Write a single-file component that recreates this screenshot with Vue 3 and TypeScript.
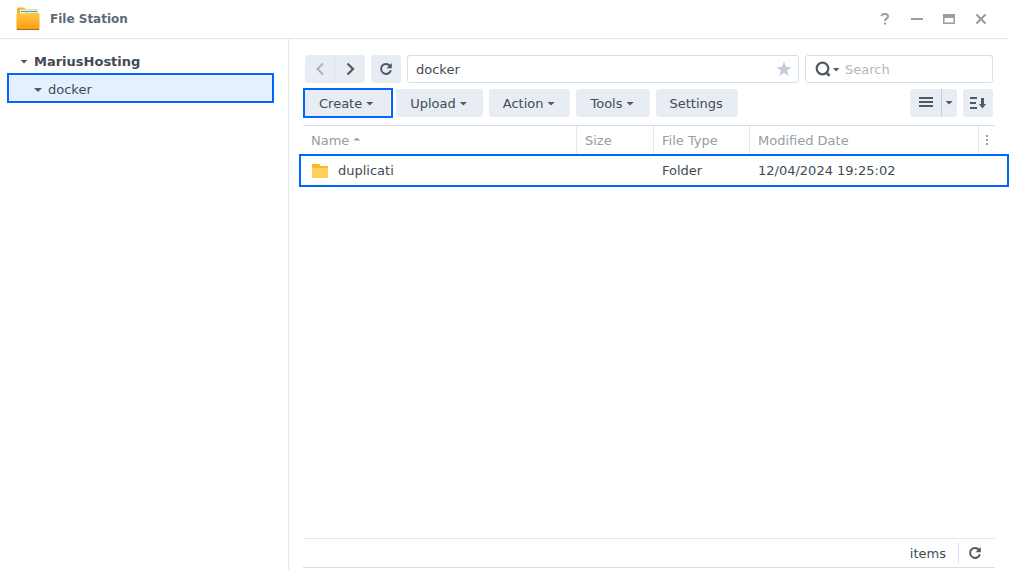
<script setup lang="ts">
import { ref } from 'vue'

interface FileRow {
  name: string
  size: string
  type: string
  modified: string
}

const path = ref<string>('docker')
const query = ref<string>('')
const menus: { label: string; arrow: boolean; marked: boolean }[] = [
  { label: 'Create', arrow: true, marked: true },
  { label: 'Upload', arrow: true, marked: false },
  { label: 'Action', arrow: true, marked: false },
  { label: 'Tools', arrow: true, marked: false },
  { label: 'Settings', arrow: false, marked: false },
]
const rows: FileRow[] = [
  { name: 'duplicati', size: '', type: 'Folder', modified: '12/04/2024 19:25:02' },
]
</script>

<template>
  <div class="window">
    <header class="titlebar">
      <svg class="logo" width="24" height="24" viewBox="0 0 24 24" aria-hidden="true">
        <defs>
          <linearGradient id="folder-front" x1="0" y1="0" x2="0" y2="1">
            <stop offset="0" stop-color="#ffc842" />
            <stop offset="1" stop-color="#fb9a12" />
          </linearGradient>
        </defs>
        <path d="M1 2Q1 0.500 2.500 0.500H7.500Q8.500 0.500 9 1.500L9.500 2H21Q22 2 22 3V12H1Z" fill="#f5b02c" />
        <path d="M4 2.500H22.500V9H4Z" fill="#f4f8f2" />
        <path d="M5 4.500H21.500" stroke="#55ad86" stroke-width="1.200" />
        <path d="M0.500 7.500Q0.500 6.500 1.500 6.500H8L9.500 6H22.500Q23.500 6 23.500 7V22Q23.500 23 22.500 23H1.500Q0.500 23 0.500 22Z" fill="url(#folder-front)" />
        <path d="M1 22.500H23" stroke="#a8681c" stroke-width="1" />
      </svg>
      <h1>File Station</h1>
      <div class="window-controls">
        <button type="button" aria-label="Help">
          <svg width="12" height="14" viewBox="0 0 12 14"><path d="M2.500 4.200Q2.700 2 5.800 2Q9 2 9 4.400Q9 5.800 7.300 6.800Q6 7.600 6 9" fill="none" stroke="currentColor" stroke-width="2" /><path d="M5 10.500H7V12.500H5Z" fill="currentColor" /></svg>
        </button>
        <button type="button" aria-label="Minimize">
          <svg width="12" height="14" viewBox="0 0 12 14"><path d="M0 6H12V8H0Z" fill="currentColor" /></svg>
        </button>
        <button type="button" aria-label="Maximize">
          <svg width="12" height="14" viewBox="0 0 12 14"><path d="M0 2H12V12H0ZM1.500 6V10.500H10.500V6Z" fill="currentColor" fill-rule="evenodd" /></svg>
        </button>
        <button type="button" aria-label="Close">
          <svg width="12" height="14" viewBox="0 0 12 14"><path d="M1.500 2.500L10.500 11.500M10.500 2.500L1.500 11.500" stroke="currentColor" stroke-width="2.200" /></svg>
        </button>
      </div>
    </header>

    <div class="body">
      <nav class="sidebar" aria-label="Folders">
        <a href="#root" class="node root"><i class="tri"></i>MariusHosting</a>
        <a href="#docker" class="node child"><i class="tri"></i>docker</a>
      </nav>

      <main class="content">
        <div class="bar">
          <div class="split">
            <button type="button" class="btn icon" aria-label="Back" disabled>
              <svg width="12" height="14" viewBox="0 0 12 14"><path d="M9 1.500L3.500 7L9 12.500" fill="none" stroke="currentColor" stroke-width="2" /></svg>
            </button>
            <button type="button" class="btn icon" aria-label="Forward">
              <svg width="12" height="14" viewBox="0 0 12 14"><path d="M3.500 1.500L9 7L3.500 12.500" fill="none" stroke="currentColor" stroke-width="2.200" /></svg>
            </button>
          </div>
          <button type="button" class="btn icon" aria-label="Refresh">
            <svg width="14" height="14" viewBox="0 0 14 14"><path d="M11 3.800A5 5 0 1 0 11.900 8.200" fill="none" stroke="currentColor" stroke-width="2" /><path d="M12.800 1V6.300H7.500Z" fill="currentColor" /></svg>
          </button>
          <div class="field path">
            <input v-model="path" type="text" aria-label="Path" />
            <button type="button" class="plain star" aria-label="Favorite">
              <svg width="16" height="16" viewBox="0 0 16 16"><path d="M8 0.500L10 5.900L15.600 6.100L11.200 9.600L12.800 15L8 11.800L3.200 15L4.800 9.600L0.400 6.100L6 5.900Z" fill="currentColor" /></svg>
            </button>
          </div>
          <div class="field search">
            <button type="button" class="plain glyph" aria-label="Search options">
              <svg width="25" height="16" viewBox="0 0 25 16"><circle cx="7.500" cy="7.500" r="5.800" fill="none" stroke="currentColor" stroke-width="2.200" /><path d="M11 11L14.500 14.800" stroke="currentColor" stroke-width="2.600" /><path d="M18 7H24.500L21.200 10.500Z" fill="currentColor" /></svg>
            </button>
            <input v-model="query" type="text" placeholder="Search" aria-label="Search" />
          </div>
        </div>

        <div class="bar actions">
          <button v-for="m in menus" :key="m.label" type="button" class="btn text" :class="{ marked: m.marked }">
            {{ m.label }}<i v-if="m.arrow" class="tri small"></i>
          </button>
          <div class="split views">
            <button type="button" class="btn icon" aria-label="List view">
              <svg width="14" height="14" viewBox="0 0 14 14"><path d="M0 1H14V3H0ZM0 5H14V7H0ZM0 9H14V11H0Z" fill="currentColor" /></svg>
            </button>
            <button type="button" class="btn narrow" aria-label="View menu"><i class="tri small"></i></button>
          </div>
          <button type="button" class="btn icon" aria-label="Sort">
            <svg width="16" height="12" viewBox="0 0 16 12"><path d="M0 0H7V2H0ZM0 5H6V7H0ZM0 10H7V12H0ZM11 1H14V7H16L12.500 11.500L9 7H11Z" fill="currentColor" /></svg>
          </button>
        </div>

        <section class="list">
          <table>
            <colgroup>
              <col class="c-name" />
              <col class="c-size" />
              <col class="c-type" />
              <col />
              <col class="c-more" />
            </colgroup>
            <thead>
              <tr>
                <th>Name<i class="tri small up"></i></th>
                <th>Size</th>
                <th>File Type</th>
                <th>Modified Date</th>
                <th class="more">
                  <button type="button" class="plain" aria-label="Columns">
                    <svg width="3" height="12" viewBox="0 0 3 12"><path d="M0 2H2V4H0ZM0 6H2V8H0ZM0 10H2V12H0Z" fill="currentColor" /></svg>
                  </button>
                </th>
              </tr>
            </thead>
            <tbody>
              <tr v-for="r in rows" :key="r.name">
                <td class="first">
                  <div class="file">
                    <svg width="16" height="14" viewBox="0 0 16 14" aria-hidden="true"><path d="M0 0H7L9 2H16V6H0Z" fill="#fdb52b" /><path d="M0 4H16V14H0Z" fill="#ffd05a" /></svg>
                    <span>{{ r.name }}</span>
                  </div>
                </td>
                <td>{{ r.size }}</td>
                <td>{{ r.type }}</td>
                <td>{{ r.modified }}</td>
                <td class="more"></td>
              </tr>
            </tbody>
          </table>
        </section>

        <footer class="status">
          <span>items</span>
          <button type="button" class="plain reload" aria-label="Reload list">
            <svg width="14" height="14" viewBox="0 0 14 14"><path d="M11 3.800A5 5 0 1 0 11.900 8.200" fill="none" stroke="currentColor" stroke-width="2" /><path d="M12.800 1V6.300H7.500Z" fill="currentColor" /></svg>
          </button>
        </footer>
      </main>
    </div>
  </div>
</template>

<style>
body {
  margin: 0;
  background: #fff;
}
</style>

<style scoped>
* {
  box-sizing: border-box;
}
.window {
  display: flex;
  flex-direction: column;
  min-height: 100vh;
  color: #414b55;
  font: 13px/20px Verdana, "DejaVu Sans", sans-serif;
}
button,
input {
  font: inherit;
  color: inherit;
  padding: 0;
  border: 0;
  background: none;
}
svg {
  display: block;
  flex: none;
}
.titlebar {
  display: flex;
  align-items: center;
  height: 39px;
  padding: 0 22px 0 16px;
  border-bottom: 1px solid #dfe6ee;
}
h1 {
  margin: 0 0 0 10px;
  font-size: 12px;
  line-height: 20px;
  color: #5f6973;
}
.window-controls {
  display: flex;
  gap: 20px;
  margin-left: auto;
  color: #969ea8;
}
.body {
  display: flex;
  flex: 1;
}
.sidebar {
  width: 289px;
  flex: none;
  padding: 9px 14px 0 7px;
  border-right: 1px solid #dfe6ee;
}
.node {
  display: flex;
  align-items: center;
  gap: 6px;
  color: #414b55;
  text-decoration: none;
}
.root {
  height: 25px;
  padding: 2px 0 0 13px;
  font-weight: bold;
}
.child {
  height: 30px;
  padding: 4px 0 0 25px;
  background: #e4f0fd;
  border: 2px solid #0066ff;
}
.tri {
  width: 8px;
  height: 4px;
  background: #505a64;
  clip-path: polygon(0 0, 100% 0, 50% 100%);
}
.tri.small {
  display: inline-block;
  width: 8px;
  height: 4px;
  clip-path: polygon(0 0, 90% 0, 45% 90%);
}
.tri.up {
  width: 7px;
  height: 3px;
  margin: 0 0 4px 4px;
  background: #959da6;
  clip-path: polygon(50% 0, 100% 100%, 0 100%);
}
.content {
  display: flex;
  flex: 1;
  flex-direction: column;
  min-width: 0;
  padding: 16px 14px 2px;
}
.bar {
  display: flex;
  gap: 6px;
  padding: 0 2px;
}
.actions {
  margin-top: 6px;
}
.btn {
  position: relative;
  display: flex;
  align-items: center;
  justify-content: center;
  gap: 4px;
  height: 28px;
  border-radius: 3px;
  background: #e8edf4;
}
.text {
  padding: 2px 15px 0 14px;
}
.icon {
  width: 30px;
  color: #505a64;
}
.icon:disabled {
  color: #a9b1bc;
}
.marked {
  padding-right: 16px;
}
.marked::after {
  content: "";
  position: absolute;
  inset: -1px -3px -1px -2px;
  border: 2px solid #0066ff;
}
.split {
  display: flex;
}
.split .btn:first-child {
  border-radius: 3px 0 0 3px;
  border-right: 1px solid #dbe2ec;
}
.split .btn:last-child {
  border-radius: 0 3px 3px 0;
}
.views {
  margin-left: auto;
}
.views .btn:first-child {
  width: 32px;
  border-color: #c6cedb;
}
.narrow {
  width: 15px;
}
.field {
  display: flex;
  align-items: center;
  height: 28px;
  border: 1px solid #d3dfea;
  border-radius: 3px;
}
.field input {
  flex: 1;
  min-width: 0;
  height: 26px;
  outline: 0;
}
.path {
  flex: 1;
  min-width: 0;
  padding: 0 6px 0 8px;
}
.star {
  color: #c4ceda;
}
.search {
  width: 188px;
  padding-left: 9px;
  gap: 5px;
}
.glyph {
  color: #505a64;
}
.search input::placeholder {
  color: #b0b7bf;
  opacity: 1;
}
.list {
  flex: 1;
  margin-top: 8px;
  border-top: 1px solid #d3dfea;
}
table {
  width: 100%;
  table-layout: fixed;
  border-collapse: separate;
  border-spacing: 0;
}
.c-name {
  width: 274px;
}
.c-size {
  width: 77px;
}
.c-type {
  width: 96px;
}
.c-more {
  width: 16px;
}
th,
td {
  padding: 0 8px;
  text-align: left;
  white-space: nowrap;
}
th {
  height: 29px;
  font-weight: normal;
  color: #959da6;
  border-right: 1px solid #e1e8f0;
}
.more {
  padding: 0 0 0 7px;
  border-right: 0;
}
tbody tr {
  position: relative;
}
.first::after {
  content: "";
  position: absolute;
  inset: -1px -14px -1px -4px;
  border: 2px solid #0066ff;
}
td {
  height: 31px;
}
.file {
  display: flex;
  align-items: center;
  gap: 10px;
  padding-left: 1px;
}
.status {
  display: flex;
  align-items: center;
  justify-content: flex-end;
  gap: 12px;
  height: 30px;
  padding-right: 13px;
  border-top: 1px solid #e1e8f0;
  border-bottom: 1px solid #d3dfea;
}
.status span {
  padding-top: 2px;
}
.reload {
  height: 20px;
  padding-left: 9px;
  color: #505a64;
  border-left: 1px solid #d3dfea;
}
</style>
